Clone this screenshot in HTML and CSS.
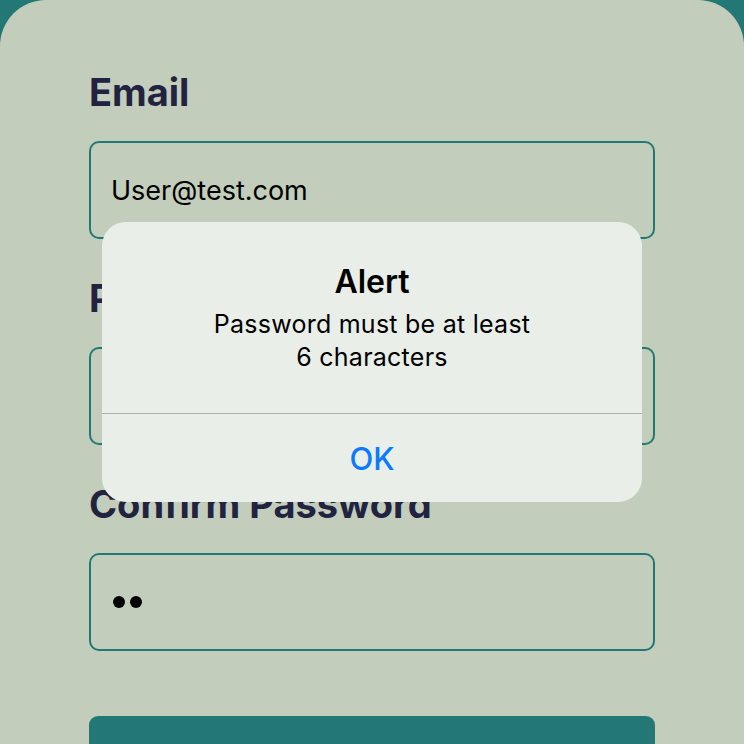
FILE: index.html
```html
<!DOCTYPE html>
<html lang="en">
<head>
<meta charset="utf-8">
<title>Sign up</title>
<link rel="stylesheet" href="styles.css">
</head>
<body>
<main class="card">
  <form class="form">
    <div class="field">
      <label class="label">Email</label>
      <div class="input"><span class="value">User@test.com</span></div>
    </div>
    <div class="field">
      <label class="label">Password</label>
      <div class="input"><span class="dots"><i></i><i></i><i></i><i></i></span></div>
    </div>
    <div class="field">
      <label class="label">Confirm Password</label>
      <div class="input"><span class="dots"><i></i><i></i></span></div>
    </div>
    <div class="submit"></div>
  </form>
</main>
<div class="alert" role="alertdialog">
  <div class="alert-body">
    <div class="alert-title">Alert</div>
    <div class="alert-msg">Password must be at least<br>6 characters</div>
  </div>
  <div class="alert-btn">OK</div>
</div>
</body>
</html>
```
FILE: styles.css
```css
html, body {
  margin: 0;
  padding: 0;
}
body {
  background: #237876;
  width: 744px;
  height: 744px;
  overflow: hidden;
  font-family: Inter, "Noto Sans", sans-serif;
  position: relative;
}
.card {
  background: #c2cdbb;
  border-radius: 46px 46px 0 0;
  height: 744px;
  box-sizing: border-box;
  padding: 70px 89px 0 89px;
}
.form {
  display: flex;
  flex-direction: column;
}
.field {
  display: flex;
  flex-direction: column;
  gap: 27px;
  margin-bottom: 37px;
}
.label {
  font-size: 38px;
  line-height: 44px;
  font-weight: 700;
  color: #222340;
}
.input {
  height: 98px;
  box-sizing: border-box;
  border: 2px solid #237876;
  border-radius: 10px;
  padding: 0 20px;
  display: flex;
  align-items: center;
}
.value {
  font-size: 27px;
  color: #000;
}
.dots {
  display: flex;
  gap: 5px;
  padding-left: 2px;
}
.dots i {
  display: block;
  width: 12px;
  height: 12px;
  border-radius: 50%;
  background: #000;
}
.submit {
  margin-top: 28px;
  height: 28px;
  background: #237876;
  border-radius: 9px 9px 0 0;
}
.alert {
  position: absolute;
  left: 102px;
  top: 222px;
  width: 540px;
  height: 280px;
  background: #e9efe8;
  border-radius: 24px;
  display: flex;
  flex-direction: column;
  text-align: center;
}
.alert-body {
  padding: 41px 20px 0;
  height: 192px;
  box-sizing: border-box;
  border-bottom: 1px solid #adb3a9;
}
.alert-title {
  font-size: 32px;
  line-height: 38px;
  font-weight: 600;
  color: #000;
  margin-bottom: 7px;
}
.alert-msg {
  font-size: 25px;
  line-height: 33px;
  letter-spacing: 0.25px;
  color: #000;
}
.alert-btn {
  flex: 1;
  display: flex;
  align-items: center;
  justify-content: center;
  font-size: 31px;
  font-weight: 500;
  color: #0a7aff;
}
```
